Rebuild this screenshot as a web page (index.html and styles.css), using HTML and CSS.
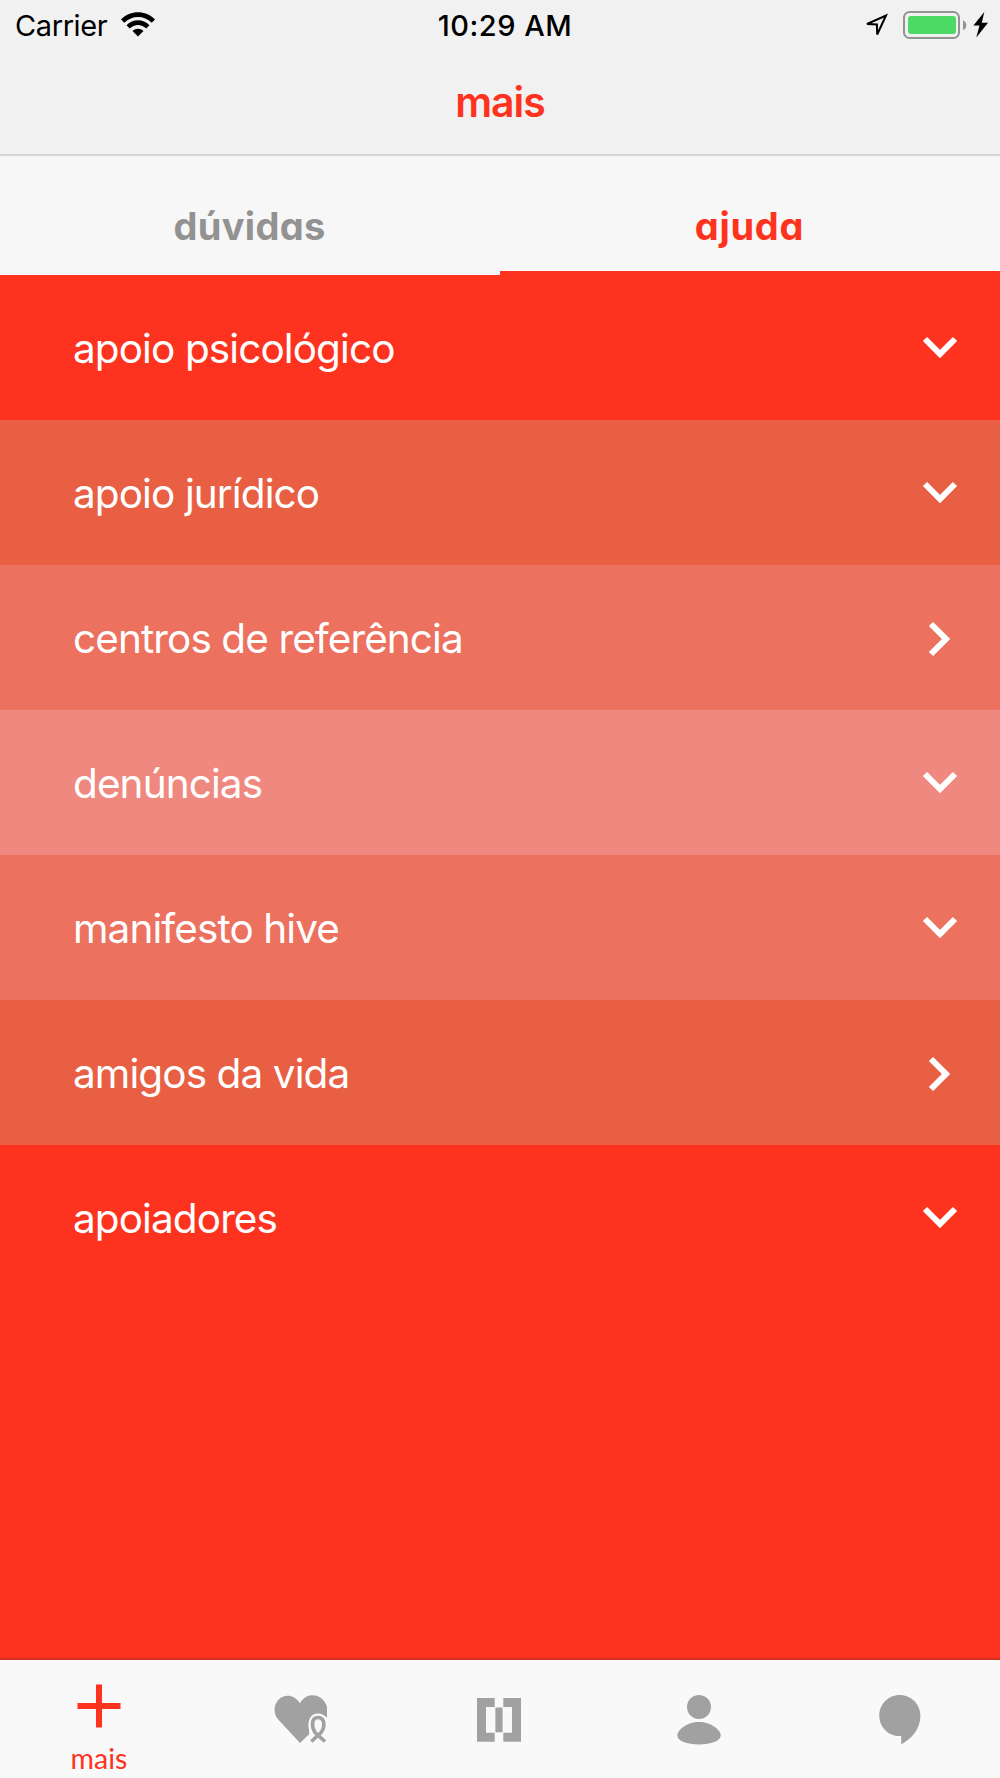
FILE: index.html
```html
<!DOCTYPE html>
<html lang="pt-BR">
<head>
<meta charset="utf-8">
<title>mais</title>
<link rel="stylesheet" href="styles.css">
</head>
<body>
<div class="screen">
  <header class="header">
    <div class="status">
      <div class="status-left">
        <span class="carrier">Carrier</span>
        <svg class="wifi" width="34" height="25" viewBox="0 0 34 25"><path d="M0 7.4C9.500-2.300 24.500-2.300 34 7.400L30.700 10.800C23 3 11 3 3.300 10.800Z"/><path d="M5.500 13.200C12 6.500 22 6.500 28.500 13.200L25.200 16.500C20.500 11.800 13.500 11.800 8.800 16.500Z"/><path d="M11.500 19C14.800 15.900 19.200 15.900 22.500 19L17 24.600Z"/></svg>
      </div>
      <div class="clock">10:29 AM</div>
      <div class="status-right">
        <svg class="location" width="25" height="26" viewBox="0 0 25 26"><path fill="none" stroke="#000" stroke-width="2" d="M3 11L22 2.500L13.200 21.500L12.900 11.500Z"/></svg>
        <svg class="battery" width="64" height="28" viewBox="0 0 64 28"><rect x="1" y="1" width="55" height="26" rx="5.500" fill="none" stroke="#939393" stroke-width="2"/><rect x="5" y="5" width="48" height="18" rx="3" fill="#4cd964"/><path fill="#939393" d="M60 9.300Q63.300 11 63.300 14.200Q63.300 17.500 60 19.200Z"/></svg>
        <svg width="16" height="26" viewBox="0 0 16 26"><path d="M11.300 0L.4 13.600H6.500L3.300 25.500L15 10.700H8.800Z"/></svg>
      </div>
    </div>
    <h1 class="title">mais</h1>
  </header>

  <nav class="tabs">
    <div class="tab">dúvidas</div>
    <div class="tab tab-active">ajuda</div>
  </nav>

  <main class="list">
    <div class="row tone-1"><span>apoio psicológico</span><svg class="down" viewBox="0 0 34 22"><path d="M2 3L17 18L32 3"/></svg></div>
    <div class="row tone-2"><span>apoio jurídico</span><svg class="down" viewBox="0 0 34 22"><path d="M2 3L17 18L32 3"/></svg></div>
    <div class="row tone-3"><span>centros de referência</span><svg class="right" viewBox="0 0 22 34"><path d="M3 2L18 17L3 32"/></svg></div>
    <div class="row tone-4"><span>denúncias</span><svg class="down" viewBox="0 0 34 22"><path d="M2 3L17 18L32 3"/></svg></div>
    <div class="row tone-3"><span>manifesto hive</span><svg class="down" viewBox="0 0 34 22"><path d="M2 3L17 18L32 3"/></svg></div>
    <div class="row tone-2"><span>amigos da vida</span><svg class="right" viewBox="0 0 22 34"><path d="M3 2L18 17L3 32"/></svg></div>
    <div class="row tone-1"><span>apoiadores</span><svg class="down" viewBox="0 0 34 22"><path d="M2 3L17 18L32 3"/></svg></div>
  </main>

  <footer class="tabbar">
    <div class="item item-active">
      <svg width="44" height="44" viewBox="0 0 44 44"><path d="M19 .5H25V19H43.500V25H25V43.500H19V25H.5V19H19Z"/></svg>
      <span>mais</span>
    </div>
    <div class="item item-wide">
      <svg width="54" height="50" viewBox="0 0 54 50"><path d="M27 8.300C21.500-.5 11.500-1.400 5.500 4.700C.3 10.300.3 18.500 5 24.300L27 48L54 22V12C50.500-1 34-4.500 27 8.300Z"/><path d="M37 50L36 35C33.500 24 39 17.500 46 18.500Q51 19.300 54 23V50Z" fill="#f9f9f9"/><path d="M38.300 46.500L48 37.500C52 32.500 52.300 22.500 45 22.500C38 22.500 38.500 32 42 37.500L52 46.500" fill="none" stroke="#a1a1a1" stroke-width="3.600"/></svg>
    </div>
    <div class="item">
      <svg width="46" height="50" viewBox="0 0 46 50"><path fill-rule="evenodd" d="M1 3H18.700V12H10V37.700H18.700V46.700H1ZM45 3H27.300V12H36V37.700H27.300V46.700H45ZM19.400 12.500H26.600V37.200H19.400Z"/></svg>
    </div>
    <div class="item">
      <svg width="46" height="50" viewBox="0 0 46 50"><circle cx="23" cy="12" r="12"/><path d="M1.300 40.500C1.300 35 11 27 23 27S44.700 35 44.700 40.500C44.700 46 35 49.500 23 49.500S1.300 46 1.300 40.500Z"/></svg>
    </div>
    <div class="item item-wide">
      <svg width="42" height="50" viewBox="0 0 42 50"><path d="M20.700 0C9.200 0 .3 9.200.3 20.700S9.500 41 20.700 41H22.200V49.500C33 43.500 41.400 33.500 41.400 20.700C41.400 9.300 32.200 0 20.700 0Z"/></svg>
    </div>
  </footer>
</div>
</body>
</html>
```
FILE: styles.css
```css
* { box-sizing: border-box; }
body { margin: 0; font-family: Inter, "Liberation Sans", sans-serif; }
svg { display: block; flex: none; }
.screen { width: 1000px; height: 1778px; display: flex; flex-direction: column; background: #fd3320; overflow: hidden; }

.header { height: 156px; background: #f1f1f1; border-bottom: 2px solid #d4d4d4; flex: none; }
.status { height: 50px; display: grid; grid-template-columns: 1fr auto 1fr; padding: 0 11px 0 15px; align-items: center; }
.status-left { display: flex; align-items: center; gap: 14px; }
.carrier { font-size: 29px; letter-spacing: -0.4px; }
.wifi { margin-bottom: 2px; }
.clock { font-size: 29px; font-weight: 500; letter-spacing: 0.5px; padding-left: 6px; }
.status-right { display: flex; justify-content: flex-end; align-items: center; gap: 6px; padding-bottom: 1px; }
.location { margin-top: 3px; }
.battery { margin-left: 8px; }
.title { margin: 0; height: 104px; line-height: 105px; text-align: center; color: #fd3320; font-size: 41px; font-weight: 600; letter-spacing: -1px; }

.tabs { height: 119px; display: flex; background: #f7f7f7; flex: none; }
.tab { flex: 1; display: flex; justify-content: center; padding: 45px 1px 0 0; line-height: 50px; font-size: 38px; font-weight: 650; color: #929292; letter-spacing: 0.3px; font-feature-settings: "cv11"; }
.tab-active { color: #fd3320; letter-spacing: 0.7px; border-bottom: 4.5px solid #fd3320; }

.list { flex: 1; }
.row { height: 145px; display: flex; justify-content: space-between; align-items: center; padding: 2px 41px 0 73px; color: #fff; font-size: 40.5px; letter-spacing: -0.9px; }
.row svg { fill: none; stroke: #fff; stroke-width: 6; overflow: visible; }
.down { width: 34px; height: 22px; margin: 0 2px 4px 0; }
.right { width: 22px; height: 34px; margin: 0 9px 0 0; }
.tone-1 { background: #fd3320; }
.tone-2 { background: #e95f44; }
.tone-3 { background: #ec715f; }
.tone-4 { background: #ef887e; }

.tabbar { height: 120px; flex: none; display: grid; grid-template-columns: repeat(5, 200px); background: #f9f9f9; border-top: 2px solid #d4301f; }
.item { display: flex; flex-direction: column; align-items: center; padding: 35px 2px 0 0; fill: #a1a1a1; }
.item-wide { padding-right: 0; }
.item-active { padding-top: 24px; fill: #fd3320; color: #fd3320; font: 28.500px/34px Lato, sans-serif; gap: 13px; }
```
